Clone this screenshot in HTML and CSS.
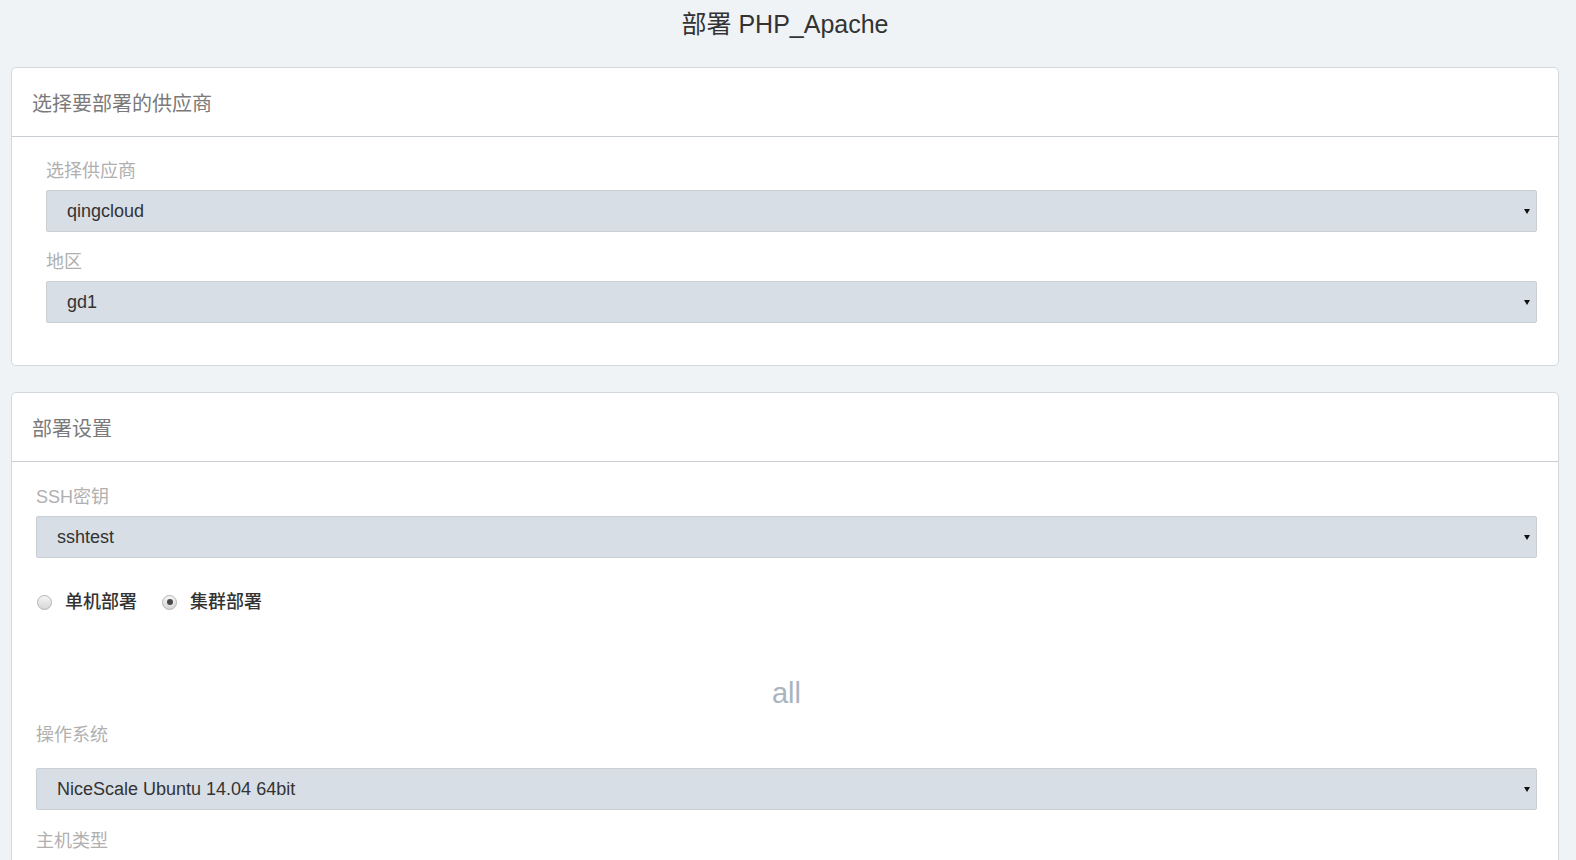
FILE: index.html
```html
<!DOCTYPE html>
<html lang="zh-CN">
<head>
<meta charset="utf-8">
<title>部署 PHP_Apache</title>
<link rel="stylesheet" href="styles.css">
</head>
<body>
<div class="page">
  <h1 class="title">部署 PHP_Apache</h1>

  <section class="panel panel-first">
    <div class="panel-head">选择要部署的供应商</div>
    <div class="panel-body body-a">
      <div class="field">
        <label class="label">选择供应商</label>
        <div class="select"><span class="value">qingcloud</span><span class="arrow"></span></div>
      </div>
      <div class="field">
        <label class="label">地区</label>
        <div class="select"><span class="value">gd1</span><span class="arrow"></span></div>
      </div>
    </div>
  </section>

  <section class="panel">
    <div class="panel-head">部署设置</div>
    <div class="panel-body body-b">
      <label class="label">SSH密钥</label>
      <div class="select"><span class="value">sshtest</span><span class="arrow"></span></div>

      <div class="radios">
        <span class="radio-item"><span class="radio"></span><span class="radio-text">单机部署</span></span>
        <span class="radio-item"><span class="radio checked"></span><span class="radio-text">集群部署</span></span>
      </div>

      <div class="group-name">all</div>

      <label class="label">操作系统</label>
      <div class="select select-os"><span class="value">NiceScale Ubuntu 14.04 64bit</span><span class="arrow"></span></div>

      <label class="label label-host">主机类型</label>
    </div>
  </section>
</div>
</body>
</html>
```

FILE: styles.css
```css
html, body {
  margin: 0;
  padding: 0;
  background: #eff3f6;
  font-family: "Liberation Sans", "Noto Sans CJK SC", sans-serif;
  overflow: hidden;
}

.page {
  padding: 0 17px 0 11px;
}

.title {
  margin: 0 0 19px;
  font-size: 25px;
  font-weight: normal;
  line-height: 48px;
  text-align: center;
  color: #333;
}

.panel {
  background: #fff;
  border: 1px solid #d3d8de;
  border-radius: 5px;
}

.panel-first {
  margin-bottom: 26px;
}

.panel-head {
  height: 68px;
  display: flex;
  align-items: center;
  padding-left: 20px;
  border-bottom: 1px solid #c9ced5;
  font-size: 20px;
  color: #7a7a7a;
}

.body-a {
  padding: 22px 21px 24px 34px;
}

.body-b {
  padding: 23px 21px 60px 24px;
}

.field {
  margin-bottom: 18px;
}

.label {
  display: block;
  font-size: 18px;
  line-height: 24px;
  color: #b0b0b0;
  margin-bottom: 7px;
}

.select {
  position: relative;
  box-sizing: border-box;
  height: 42px;
  display: flex;
  align-items: center;
  padding-left: 20px;
  background: #d8dee5;
  border: 1px solid #c9ced3;
  border-radius: 2px;
  font-size: 18px;
  color: #333;
}

.arrow {
  position: absolute;
  right: 6px;
  top: 50%;
  margin-top: -2px;
  width: 0;
  height: 0;
  border-left: 3.5px solid transparent;
  border-right: 3.5px solid transparent;
  border-top: 5px solid #111;
}

.radios {
  display: flex;
  align-items: center;
  margin-top: 32px;
  height: 24px;
  padding-left: 1px;
}

.radio-item {
  display: flex;
  align-items: center;
  margin-right: 25px;
}

.radio {
  box-sizing: border-box;
  width: 15px;
  height: 15px;
  border-radius: 50%;
  border: 1px solid #b3b3b3;
  background: linear-gradient(#f6f6f6, #d6d6d6);
  display: flex;
  align-items: center;
  justify-content: center;
  margin-right: 13px;
}

.radio.checked::after {
  content: "";
  width: 6px;
  height: 6px;
  border-radius: 50%;
  background: #4a4a4a;
}

.radio-text {
  font-size: 18px;
  line-height: 24px;
  color: #333;
  font-weight: 500;
}

.group-name {
  margin-top: 59px;
  font-size: 29px;
  line-height: 40px;
  text-align: center;
  color: #aab4bf;
  margin-bottom: 10px;
}

.select-os {
  margin-top: 21px;
}

.label-host {
  margin-top: 19px;
}
```
